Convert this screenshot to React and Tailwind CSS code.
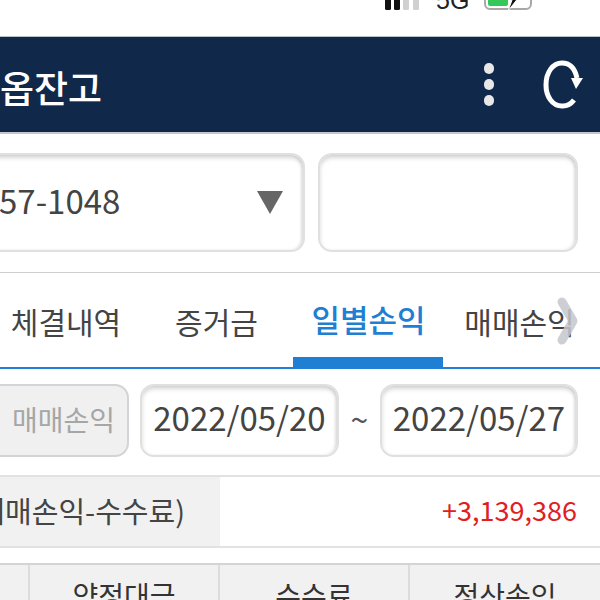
import React from 'react';

const tabs = [
  { label: '체결내역', w: 'w-[146px] pr-[14px] pt-[2px]' },
  { label: '증거금', w: 'w-[147px] pr-[6px] pt-[2px]' },
  { label: '일별손익', w: 'w-[150px] pl-[1px] pt-[9px]', active: true },
  { label: '매매손익', w: 'w-[137px] pl-[16px] pt-[2px]' },
];

const inputClass =
  'rounded-[14px] border-2 border-[#e0e0e0] bg-white shadow-[inset_0_3px_4px_rgba(0,0,0,0.16),inset_-2px_0_3px_rgba(0,0,0,0.08)]';

const StatusBar = () => (
  <div className="flex h-9 items-start justify-end bg-white pr-[64px]">
    <div className="-mt-[11px] flex items-center">
      <svg width="40" height="20" viewBox="0 0 40 20">
        <rect x="2" y="6" width="6" height="14" rx="1.5" fill="#111" />
        <rect x="11" y="3" width="6" height="17" rx="1.5" fill="#111" />
        <rect x="20" y="1" width="6" height="19" rx="1.5" fill="#d0d0d0" />
        <rect x="30" y="0" width="6" height="20" rx="1.5" fill="#d0d0d0" />
      </svg>
      <span className="ml-[13px] w-[43px] font-['Liberation_Sans',sans-serif] text-[25px] leading-5 text-[#222]">5G</span>
      <svg className="ml-[5px]" width="52" height="22" viewBox="0 0 52 22">
        <rect x="1" y="-10" width="46" height="30" rx="5" fill="#fff" stroke="#a8a8a8" strokeWidth="2" />
        <rect x="4" y="-8" width="20" height="25" rx="2" fill="#34c759" />
        <path d="M32 0 L28 11 L24 22 L35 8 Z" fill="#111" stroke="#fff" strokeWidth="1" />
      </svg>
    </div>
  </div>
);

const Header = () => (
  <div className="flex h-[98px] items-center justify-between border-t border-[#b8c0cc] border-b-2 border-b-[#c4c8ce] bg-[#10294a] pr-[17px]">
    <h1 className="mt-[5px] whitespace-nowrap text-[37px] font-medium leading-none text-white">옵잔고</h1>
    <div className="flex items-center gap-[49px]">
      <div className="flex flex-col gap-[5px]">
        <span className="h-[11px] w-[10px] rounded-full bg-[#e8e8e8]" />
        <span className="h-[11px] w-[10px] rounded-full bg-[#e8e8e8]" />
        <span className="h-[11px] w-[10px] rounded-full bg-[#e8e8e8]" />
      </div>
      <svg width="40" height="54" viewBox="0 0 40 54" fill="none">
        <path d="M31 42 A16 21 0 0 1 19 48 C9 48 3 38 3 27 C3 14 10 5 19 5 C27 5 32 11 34 20" stroke="#fff" strokeWidth="5" />
        <path d="M28 20 L40 20 L33 31 Z" fill="#fff" />
      </svg>
    </div>
  </div>
);

export default function App() {
  return (
    <div className="h-[600px] w-[600px] overflow-hidden bg-white font-['Noto_Sans_CJK_KR','Noto_Sans',sans-serif]">
      <StatusBar />
      <Header />

      <div className="flex h-[139px] items-start gap-[13px] border-b border-[#cfcfcf] pt-[19px]">
        <div className={`-ml-5 flex h-[99px] w-[325px] items-center justify-between pl-[17px] pr-[20px] ${inputClass}`}>
          <span className="-mt-[4px] text-[33px] leading-none text-[#444]">57-1048</span>
          <span className="h-0 w-0 border-x-[13px] border-t-[23px] border-x-transparent border-t-[#666]" />
        </div>
        <div className={`h-[99px] w-[260px] ${inputClass}`} />
      </div>

      <div className="relative flex h-[96px] border-b-2 border-[#2180d4]">
        {tabs.map((tab) => (
          <div
            key={tab.label}
            className={`flex h-[94px] items-center justify-center whitespace-nowrap ${tab.w} ${
              tab.active ? 'border-b-[10px] border-[#1f7fd2] text-[31px] font-medium text-[#1f7fd2]' : 'text-[30px] text-[#444]'
            }`}
          >
            {tab.label}
          </div>
        ))}
        <svg className="absolute left-[555px] top-[22px]" width="24" height="52" viewBox="0 0 24 52" fill="none">
          <path d="M7 7 L18 26 L7 45" stroke="#c4c7cc" strokeOpacity="0.85" strokeWidth="9" strokeLinecap="round" strokeLinejoin="round" />
        </svg>
      </div>

      <div className="flex h-[106px] items-start pt-[15px]">
        <div className="-ml-5 flex h-[73px] w-[149px] items-center justify-end rounded-[14px] border-2 border-[#d4d4d8] bg-[#f0f0f0] pb-[3px] pr-[12px] text-[28px] text-[#a6a6a6]">
          매매손익
        </div>
        <div className={`ml-[11px] flex h-[73px] w-[199px] items-center justify-center pb-[5px] text-[33px] text-[#444] ${inputClass}`}>
          2022/05/20
        </div>
        <span className="flex h-[73px] w-[41px] items-center justify-center pb-[5px] text-[32px] text-[#555]">~</span>
        <div className={`flex h-[73px] w-[198px] items-center justify-center pb-[5px] text-[33px] text-[#444] ${inputClass}`}>
          2022/05/27
        </div>
      </div>

      <div className="flex h-[73px] border-y-2 border-[#e2e2e2]">
        <div className="flex w-[220px] shrink-0 items-center justify-end whitespace-nowrap bg-[#f1f1f1] pb-[2px] pr-[35px] text-[29px] text-[#444]">
          매매손익-수수료)
        </div>
        <div className="flex flex-1 items-center justify-end pb-[2px] pr-[23px] text-[27px] text-[#e02020]">+3,139,386</div>
      </div>

      <div className="mt-[15px] grid h-[60px] grid-cols-[30px_190px_190px_190px] border-t-2 border-[#d4d4d4] bg-[#f1f1f1] text-[28px] text-[#333]">
        <div className="border-r-2 border-[#dcdcdc]" />
        <div className="flex justify-center border-r-2 border-[#dcdcdc] pt-[16px] leading-none">약정대금</div>
        <div className="flex justify-center border-r-2 border-[#dcdcdc] pt-[16px] leading-none">수수료</div>
        <div className="flex justify-center pt-[16px] leading-none">정산손익</div>
      </div>
    </div>
  );
}
